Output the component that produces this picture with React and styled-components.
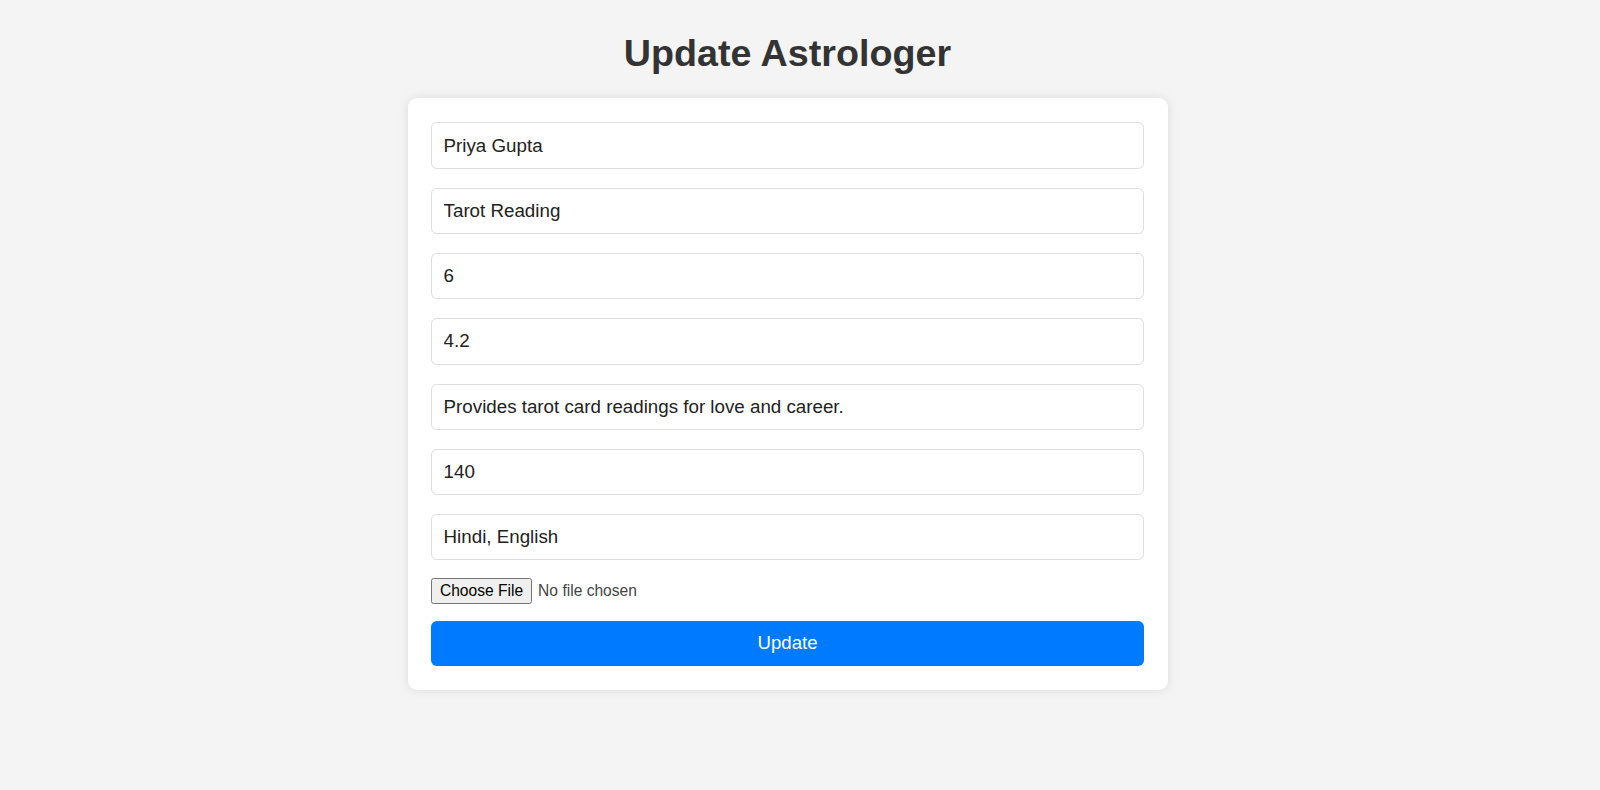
import React from "react";
import styled, { createGlobalStyle } from "styled-components";

const GlobalStyle = createGlobalStyle`
  html, body {
    margin: 0;
    padding: 0;
    background: #f4f4f4;
    font-family: "Liberation Sans", Arial, sans-serif;
    color: #333;
  }
`;

const Page = styled.div`
  min-height: 790px;
  box-sizing: border-box;
  padding: 32px 25px 0 0;
  display: flex;
  flex-direction: column;
  align-items: center;
`;

const Title = styled.h1`
  margin: 0 0 23px;
  font-size: 37.7px;
  font-weight: bold;
  color: #333;
  line-height: normal;
`;

const Card = styled.form`
  width: 760px;
  box-sizing: border-box;
  padding: 24.4px 23.4px 23.6px;
  background: #fff;
  border-radius: 9px;
  box-shadow: 0 0 11px rgba(0, 0, 0, 0.1);
  display: flex;
  flex-direction: column;
`;

const Field = styled.input`
  box-sizing: border-box;
  width: 100%;
  height: 46.3px;
  margin: 0 0 19px;
  padding: 0 11.7px;
  font-family: "Liberation Sans", Arial, sans-serif;
  font-size: 18.75px;
  color: #222;
  background: #fff;
  border: 1px solid #ddd;
  border-radius: 5.8px;
  outline: none;
`;

const FileField = styled.input`
  margin: -1.5px 0 17px;
  height: 26px;
  font-family: "Liberation Sans", Arial, sans-serif;
  font-size: 15.6px;
  color: #444;

  &::file-selector-button {
    height: 26px;
    margin-right: 6px;
    padding: 0 8px;
    font-family: "Liberation Sans", Arial, sans-serif;
    font-size: 15.6px;
    color: #000;
    background: #efefef;
    border: 1px solid #767676;
    border-radius: 2.5px;
  }
`;

const SubmitButton = styled.button`
  height: 45px;
  width: 100%;
  padding: 0;
  font-family: "Liberation Sans", Arial, sans-serif;
  font-size: 18.6px;
  color: #fff;
  background: #007bff;
  border: none;
  border-radius: 5.8px;
  cursor: pointer;
`;

const values = [
  "Priya Gupta",
  "Tarot Reading",
  "6",
  "4.2",
  "Provides tarot card readings for love and career.",
  "140",
  "Hindi, English",
];

export default function App() {
  return (
    <>
      <GlobalStyle />
      <Page>
        <Title>Update Astrologer</Title>
        <Card onSubmit={(e) => e.preventDefault()}>
          {values.map((v, i) => (
            <Field key={i} type="text" defaultValue={v} />
          ))}
          <FileField type="file" />
          <SubmitButton type="submit">Update</SubmitButton>
        </Card>
      </Page>
    </>
  );
}
